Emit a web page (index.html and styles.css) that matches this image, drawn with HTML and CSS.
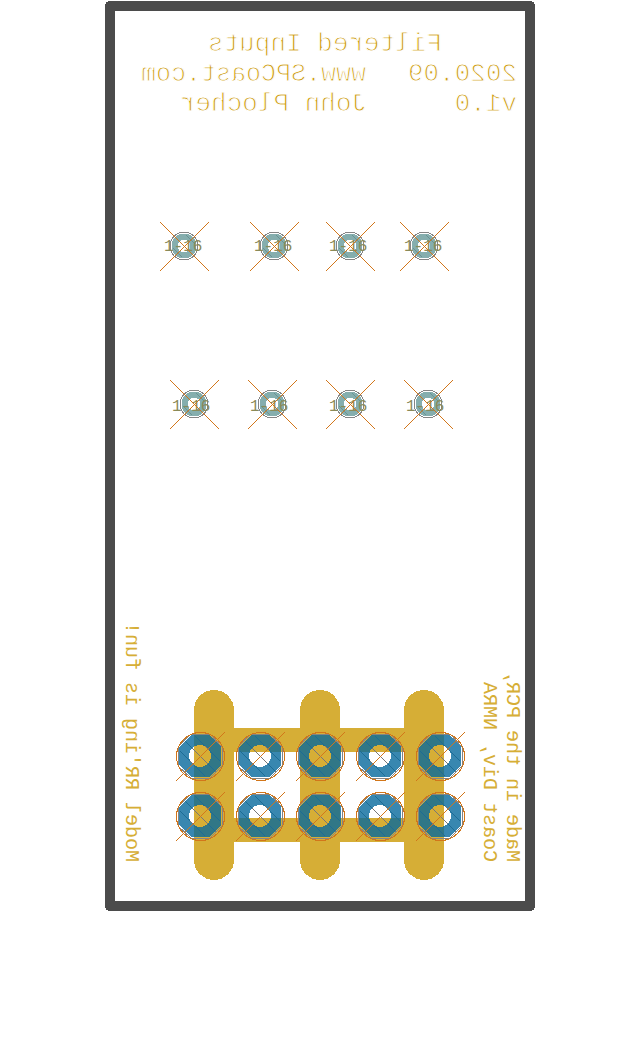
FILE: index.html
```html
<!DOCTYPE html>
<html lang="en">
<head>
<meta charset="utf-8">
<title>Filtered Inputs v1.0</title>
<link rel="stylesheet" href="styles.css">
</head>
<body>
<main>
<svg class="board" viewBox="0 0 640 1058" role="img" aria-label="Filtered Inputs circuit board, bottom side">
  <defs>
    <g id="pad">
      <path class="hatch" d="M-20-5L5 20M-16-16L16 16M-5-20L20 5"/>
      <path class="copper" fill-rule="evenodd" d="M-9-21H9L21-9V9L9 21H-9L-21 9V-9ZM-11 0A11 11 0 1 0 11 0A11 11 0 1 0-11 0Z"/>
      <path class="mask" d="M-9-22H10L22-9V10L10 22H-9L-22 10V-9Z"/>
      <path class="mask" d="M-13-19L-19-13M13-19L19-13M-13 19L-19 13M13 19L19 13"/>
      <circle class="keepout" cx="0.5" cy="0.5" r="24"/>
      <path class="keepout" d="M-24 25L25-24"/>
    </g>
    <g id="via">
      <path class="hatch" d="M-10-10L10 10M-11 2L-2 11M2-11L11-2"/>
      <circle class="ring" r="9.5"/>
      <circle class="mask" r="14"/>
    </g>
    <path id="cross" class="keepout" d="M-24-24L25 25M-24 25L25-24"/>
  </defs>

  <g class="shapes">
    <path class="pour" d="M214 710V860M320 710V860M424 710V860"/>
    <path class="link" d="M214 740H424M214 830H424"/>
    <use href="#pad" x="200" y="756"/><use href="#pad" x="260" y="756"/><use href="#pad" x="320" y="756"/><use href="#pad" x="380" y="756"/><use href="#pad" x="440" y="756"/>
    <use href="#pad" x="200" y="816"/><use href="#pad" x="260" y="816"/><use href="#pad" x="320" y="816"/><use href="#pad" x="380" y="816"/><use href="#pad" x="440" y="816"/>
    <use href="#via" x="184" y="246"/><use href="#via" x="274" y="246"/><use href="#via" x="350" y="246"/><use href="#via" x="424" y="246"/>
    <use href="#via" x="194" y="404"/><use href="#via" x="272" y="404"/><use href="#via" x="350" y="404"/><use href="#via" x="428" y="404"/>
  </g>

  <g class="layers">
    <text x="164" y="251">1-16</text><text x="254" y="251">1-16</text><text x="329" y="251">1-16</text><text x="404" y="251">1-16</text>
    <text x="172" y="411">1-16</text><text x="250" y="411">1-16</text><text x="329" y="411">1-16</text><text x="406" y="411">1-16</text>
  </g>

  <g class="shapes">
    <use href="#cross" x="184" y="246"/><use href="#cross" x="274" y="246"/><use href="#cross" x="350" y="246"/><use href="#cross" x="424" y="246"/>
    <use href="#cross" x="194" y="404"/><use href="#cross" x="272" y="404"/><use href="#cross" x="350" y="404"/><use href="#cross" x="428" y="404"/>
    <path class="outline" d="M110 6H530V906H110Z"/>
  </g>

  <!-- Bottom silkscreen reads mirrored from this side -->
  <g class="silk large" transform="translate(640 0) scale(-1 1)">
    <text x="198" y="51">Filtered Inputs</text>
    <text x="123" y="81">2020.09</text>
    <text class="site" x="274" y="81">www.SPCoast.com</text>
    <text x="123" y="111">v1.0</text>
    <text x="273" y="111">John Plocher</text>
  </g>
  <g class="silk small">
    <text transform="matrix(0 -1 -1 0 126 862)">Model RR'ing is fun!</text>
    <text transform="matrix(0 -1 -1 0 484 862)">Coast Div, NMRA</text>
    <text transform="matrix(0 -1 -1 0 507 862)">Made in the PCR,</text>
  </g>
</svg>
</main>
</body>
</html>
```
FILE: styles.css
```css
body {
  margin: 0;
  background: #fff;
}

.board {
  display: block;
  width: 100%;
  height: auto;
  font-family: "Liberation Mono", monospace;
}

.shapes {
  fill: none;
  shape-rendering: crispEdges;
}

.outline {
  stroke: #4b4b4b;
  stroke-width: 10px;
  stroke-linejoin: round;
}

.pour {
  stroke: #d6ae36;
  stroke-width: 40px;
  stroke-linecap: round;
}

.link {
  stroke: #d6ae36;
  stroke-width: 24px;
}

.hatch {
  stroke: #777;
  stroke-width: 1px;
}

.copper {
  fill: #06699c;
  fill-opacity: 0.8;
}

.ring {
  stroke: #669a9a;
  stroke-opacity: 0.8;
  stroke-width: 6px;
}

.mask {
  stroke: #858585;
  stroke-width: 1px;
}

.keepout {
  stroke: #d2761a;
  stroke-width: 1px;
}

.layers {
  fill: #8a8a58;
  font-size: 16px;
}

.silk {
  fill: #d6ae36;
}

.large {
  fill: #cc9a10;
  stroke: #fff;
  stroke-width: 1px;
  font-size: 26px;
}

.site {
  font-size: 25px;
}

.small {
  font-size: 20px;
}
```
